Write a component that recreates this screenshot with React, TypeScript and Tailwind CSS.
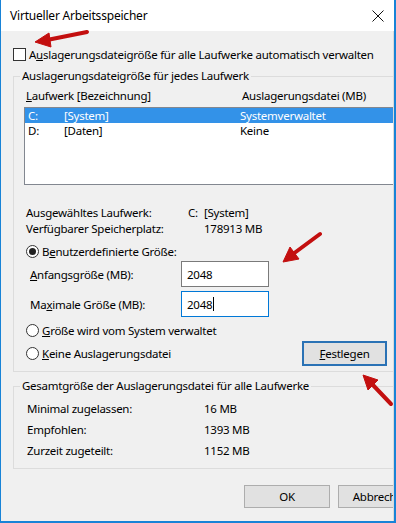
import React from "react";

const font = "font-['Noto_Sans','Liberation_Sans',sans-serif]";

const Radio = ({ checked }: { checked?: boolean }) => (
  <span className="w-[13px] h-[13px] rounded-full border border-[#333] bg-white flex items-center justify-center shrink-0">
    {checked && <span className="w-[7px] h-[7px] rounded-full bg-[#222]" />}
  </span>
);

const Arrows = () => (
  <svg className="absolute inset-0 pointer-events-none" width="396" height="523" viewBox="0 0 396 523">
    <g fill="#c30f0f" stroke="#c30f0f">
      <line x1="86" y1="32" x2="46" y2="40" strokeWidth="4" strokeLinecap="round" />
      <polygon points="34,42 48,33 50,47" strokeWidth="1" />
      <line x1="319" y1="234" x2="292" y2="254" strokeWidth="4" strokeLinecap="round" />
      <polygon points="282,262 289,247 298,259" strokeWidth="1" />
      <line x1="390" y1="404" x2="371" y2="384" strokeWidth="4" strokeLinecap="round" />
      <polygon points="362,375 377,380 367,390" strokeWidth="1" />
    </g>
  </svg>
);

export default function App() {
  return (
    <div className={`${font} relative w-[396px] h-[523px] bg-[#f0f0f0] border-l border-r-2 border-b-2 border-[#1883d7] overflow-hidden text-[11.5px] tracking-[-0.25px] leading-[15px] text-black`}>
      {/* title bar */}
      <div className="h-[31px] bg-white flex items-center justify-between pl-[9px] pr-[8px]">
        <span className="text-[12px] tracking-[-0.2px]">Virtueller Arbeitsspeicher</span>
        <svg width="12" height="12" viewBox="0 0 12 12" className="mr-[2px]">
          <path d="M0.5 0.5 L11.5 11.5 M11.5 0.5 L0.5 11.5" stroke="#111" strokeWidth="1" />
        </svg>
      </div>

      <div className="h-[490px] border-r border-[#d9d9d9] overflow-hidden">
        {/* auto checkbox */}
        <div className="mt-[17px] pl-[12px] flex items-center h-[13px]">
          <span className="w-[13px] h-[13px] border border-[#333] bg-white shrink-0" />
          <span className="ml-[3px] whitespace-nowrap">
            A<u>u</u>slagerungsdateigröße für alle Laufwerke automatisch verwalten
          </span>
        </div>

        {/* group: per drive */}
        <fieldset className="mt-[7px] ml-[12px] w-[400px] border border-[#dcdcdc]">
          <legend className="ml-[6px] px-[2px] leading-[16px] whitespace-nowrap">
            Auslagerungsdateigröße für jedes Laufwerk
          </legend>
          <div className="pl-[10px]">
            <div className="mt-[4px] flex pl-[2px] whitespace-nowrap">
              <span className="w-[216px]"><u>L</u>aufwerk [Bezeichnung]</span>
              <span>Auslagerungsdatei (MB)</span>
            </div>
            <div className="mt-[4px] w-[380px] h-[78px] border border-[#828790] bg-white">
              <div className="flex h-[15px] bg-[#3392e8] text-white pl-[3px] whitespace-nowrap">
                <span className="w-[36px]">C:</span>
                <span className="w-[176px]">[System]</span>
                <span>Systemverwaltet</span>
              </div>
              <div className="flex h-[15px] pl-[3px] whitespace-nowrap">
                <span className="w-[36px]">D:</span>
                <span className="w-[176px]">[Daten]</span>
                <span>Keine</span>
              </div>
            </div>

            <div className="mt-[20px] pl-[2px] whitespace-nowrap">
              <div className="flex h-[16px]">
                <span className="w-[162px]">Ausgewähltes Laufwerk:</span>
                <span className="w-[16px]">C:</span>
                <span>[System]</span>
              </div>
              <div className="flex h-[16px]">
                <span className="w-[178px]">Verfügbarer Speicherplatz:</span>
                <span>178913 MB</span>
              </div>
            </div>

            <div className="mt-[7px] pl-[2px] flex items-center gap-[3px] h-[15px]">
              <Radio checked />
              <span>B<u>e</u>nutzerdefinierte Größe:</span>
            </div>

            <div className="mt-[2px] pl-[6px] flex items-center h-[26px]">
              <span className="w-[151px]"><u>A</u>nfangsgröße (MB):</span>
              <div className="w-[88px] h-[26px] border border-[#7a7a7a] bg-white pl-[5px] flex items-center">2048</div>
            </div>
            <div className="mt-[4px] pl-[6px] flex items-center h-[26px]">
              <span className="w-[151px]">Ma<u>x</u>imale Größe (MB):</span>
              <div className="w-[88px] h-[26px] border border-[#0078d7] bg-white pl-[5px] flex items-center">
                2048<span className="w-px h-[14px] bg-black ml-[1px]" />
              </div>
            </div>

            <div className="mt-[6px] pl-[2px] flex items-center gap-[3px] h-[15px]">
              <Radio />
              <span><u>G</u>röße wird vom System verwaltet</span>
            </div>
            <div className="mt-[2px] w-[363px] pl-[2px] flex items-center justify-between h-[26px]">
              <div className="flex items-center gap-[3px]">
                <Radio />
                <span><u>K</u>eine Auslagerungsdatei</span>
              </div>
              <button className="w-[85px] h-[25px] border-2 border-[#2a72b5] bg-[#e1e1e1] flex items-center justify-center">
                <span><u>F</u>estlegen</span>
              </button>
            </div>
          </div>
          <div className="h-[5px]" />
        </fieldset>

        {/* group: total */}
        <fieldset className="mt-[6px] ml-[12px] w-[400px] border border-[#dcdcdc]">
          <legend className="ml-[6px] px-[2px] leading-[16px] whitespace-nowrap">
            Gesamtgröße der Auslagerungsdatei für alle Laufwerke
          </legend>
          <div className="mt-[4px] pb-[7px] pl-[13px]">
            {[
              ["Minimal zugelassen:", "16 MB"],
              ["Empfohlen:", "1393 MB"],
              ["Zurzeit zugeteilt:", "1152 MB"],
            ].map(([k, v]) => (
              <div key={k} className="flex h-[21px] items-center">
                <span className="w-[177px]">{k}</span>
                <span>{v}</span>
              </div>
            ))}
          </div>
        </fieldset>

        <div className="mt-[16px] pl-[243px] flex gap-[8px]">
          <button className="w-[86px] h-[23px] shrink-0 border border-[#adadad] bg-[#e1e1e1] flex items-center justify-center">
            OK
          </button>
          <button className="w-[86px] h-[23px] shrink-0 border border-[#adadad] bg-[#e1e1e1] flex items-center justify-center">
            Abbrechen
          </button>
        </div>
      </div>

      <Arrows />
    </div>
  );
}
